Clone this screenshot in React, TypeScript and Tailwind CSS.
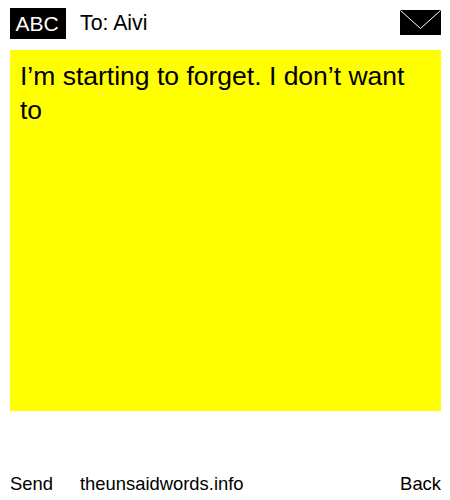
export default function App() {
  return (
    <div className="w-[450px] h-[500px] bg-white text-black flex flex-col px-[10px] font-['Liberation_Sans',Arial,sans-serif]">
      <div className="h-[50px] shrink-0 flex items-start pt-[8px]">
        <div className="w-[56px] h-[31px] bg-black text-white text-[21px] pr-[2px] flex items-center justify-center">ABC</div>
        <div className="ml-[14px] h-[31px] text-[21.3px] leading-[31px]">To: Aivi</div>
        <div className="ml-auto mt-[2px] mr-[-1px]">
          <svg width="41" height="25" viewBox="0 0 41 25" className="block">
            <rect width="41" height="25" fill="#000" />
            <path d="M0.5 0.5 L20.5 18.5 L40.5 0.5" fill="none" stroke="#fff" strokeWidth="1" />
          </svg>
        </div>
      </div>
      <div className="w-[431px] h-[361px] shrink-0 bg-[#ffff00] pl-[10px] pr-[20px] py-[9px] text-[26.5px] leading-[34px]">
        I’m starting to forget. I don’t want to
      </div>
      <div className="mt-auto h-[30px] flex items-start text-[18.4px]">
        <span>Send</span>
        <span className="ml-[27px]">theunsaidwords.info</span>
        <span className="ml-auto mr-[-1px]">Back</span>
      </div>
    </div>
  );
}
